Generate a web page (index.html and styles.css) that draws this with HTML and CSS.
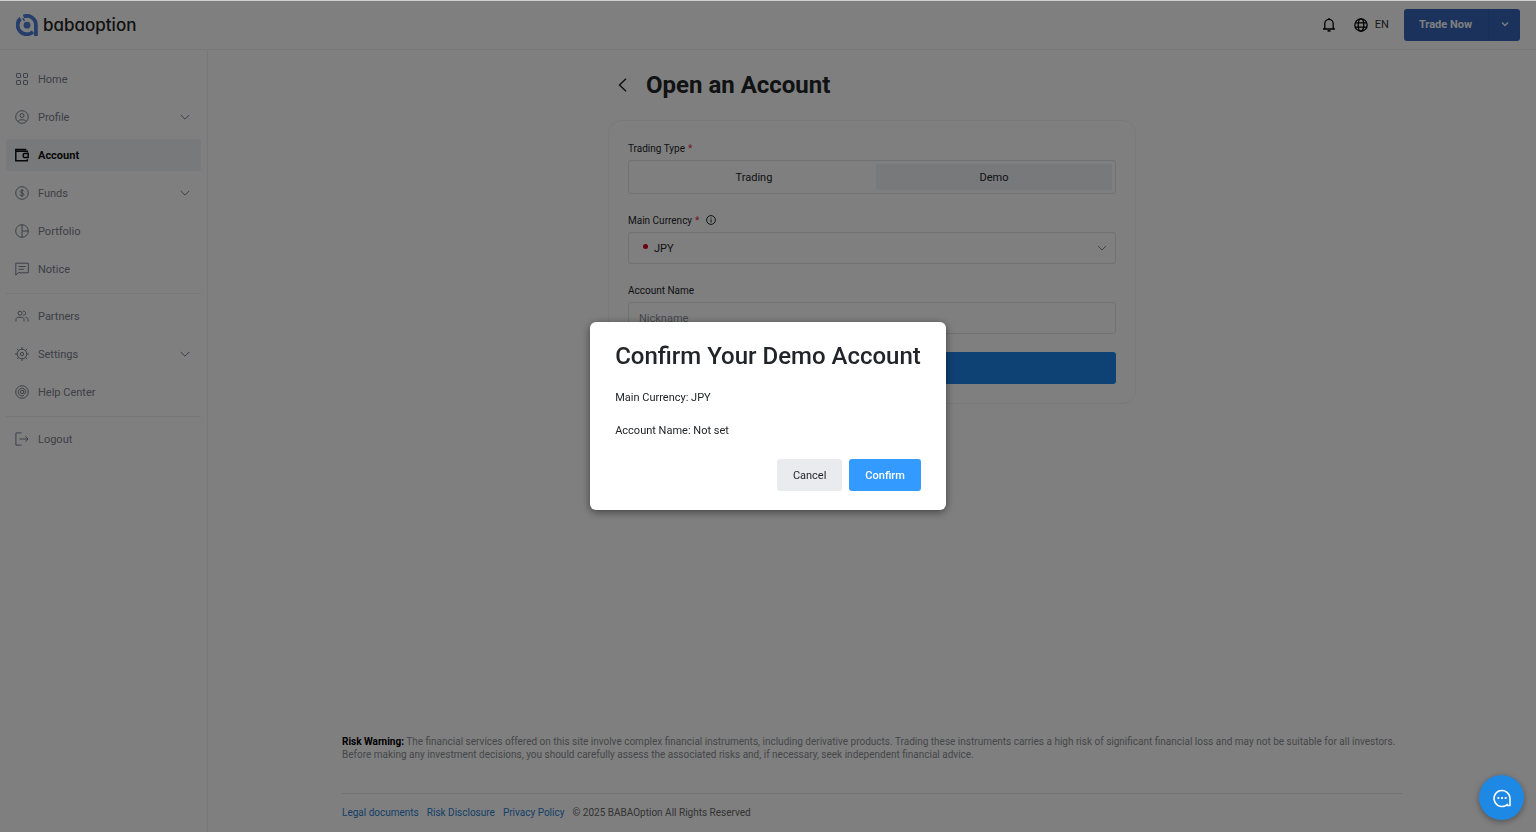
FILE: index.html
```html
<!DOCTYPE html>
<html lang="en">
<head>
  <meta charset="UTF-8" />
  <meta name="viewport" content="width=device-width, initial-scale=1.0" />
  <title>Open an Account</title>
  <link rel="stylesheet" href="styles.css">
</head>
<body>
  <header class="topbar">
    <a class="logo" href="#">
      <svg width="22" height="22" viewBox="0 0 22 22" fill="none" stroke="#4f7dd4">
        <path d="M4.500 4.500A9 9 0 1 0 17 17.800" stroke-width="3.800"/>
        <path d="M7.500 2.600A9 9 0 0 1 19.900 11V22" stroke-width="3.800"/>
        <path d="M6.800 4L8.500 7" stroke-width="1.400"/>
        <circle cx="11" cy="11.200" r="3.400" fill="#4f7dd4" stroke="none"/>
      </svg>
      <span>babaoption</span>
    </a>
    <div class="topbar-right">
      <button class="icon-btn" aria-label="Notifications">
        <svg width="14" height="14" viewBox="0 0 14 14" fill="none" stroke="currentColor" stroke-width="1.3">
          <path d="M1 11h12M2.800 11V5.600a4.200 4.200 0 0 1 8.400 0V11M7 0v1.500"/>
          <path d="M5.500 12.900h3" stroke-width="1.6"/>
        </svg>
      </button>
      <button class="lang">
        <svg width="14" height="14" viewBox="0 0 14 14" fill="none" stroke="currentColor" stroke-width="1.3">
          <circle cx="7" cy="7" r="6.2"/>
          <ellipse cx="7" cy="7" rx="2.8" ry="6.2"/>
          <path d="M1.2 4.800h11.600M1.200 9.200h11.600"/>
        </svg>
        <span>EN</span>
      </button>
      <div class="trade">
        <button class="trade-main">Trade Now</button>
        <button class="trade-more" aria-label="More">
          <svg width="8" height="8" viewBox="0 0 8 8" fill="none" stroke="currentColor" stroke-width="1.3"><path d="M1 2.500l3 3 3-3"/></svg>
        </button>
      </div>
    </div>
  </header>

  <div class="layout">
    <nav class="sidebar">
      <div class="nav-group">
        <a class="nav-item" href="#">
          <svg class="nav-icon" viewBox="0 0 14 14"><rect x="1.500" y="1.500" width="4" height="4" rx=".6"/><rect x="8.500" y="1.500" width="4" height="4" rx=".6"/><rect x="1.500" y="8.500" width="4" height="4" rx=".6"/><rect x="8.500" y="8.500" width="4" height="4" rx=".6"/></svg>
          <span>Home</span>
        </a>
        <a class="nav-item" href="#">
          <svg class="nav-icon" viewBox="0 0 14 14"><circle cx="7" cy="7" r="6.3"/><circle cx="7" cy="5.500" r="2"/><path d="M2.800 11.400C4 9.200 10 9.200 11.200 11.400"/></svg>
          <span>Profile</span>
          <svg class="chevron" viewBox="0 0 10 10"><path d="M.8 3L5 7.200 9.200 3"/></svg>
        </a>
        <a class="nav-item active" href="#">
          <svg class="nav-icon" viewBox="0 0 14 14"><path d="M12.300 4.500V3.200H.8v9.600h11.500v-1.500M.8 3.200V1.400h10.500"/><path d="M13.200 5.500H9.300a1 1 0 0 0-1 1v2a1 1 0 0 0 1 1h3.900z"/></svg>
          <span>Account</span>
        </a>
        <a class="nav-item" href="#">
          <svg class="nav-icon" viewBox="0 0 14 14"><circle cx="7" cy="7" r="6.3"/><path d="M9 5.300C8.600 3.800 5.200 3.900 5.200 5.500c0 1.800 3.700 1 3.700 2.900 0 1.700-3.500 1.800-4-.1M7 3v8"/></svg>
          <span>Funds</span>
          <svg class="chevron" viewBox="0 0 10 10"><path d="M.8 3L5 7.200 9.200 3"/></svg>
        </a>
        <a class="nav-item" href="#">
          <svg class="nav-icon" viewBox="0 0 14 14"><circle cx="7" cy="7" r="6.3"/><path d="M7 .7v12.600M7 7h6.300"/></svg>
          <span>Portfolio</span>
        </a>
        <a class="nav-item" href="#">
          <svg class="nav-icon" viewBox="0 0 14 14"><path d="M.8 13.200V1.200h12.500v9.600H3.200zM3.600 4.500h7M3.600 7.300h5.200"/></svg>
          <span>Notice</span>
        </a>
      </div>
      <div class="nav-group">
        <a class="nav-item" href="#">
          <svg class="nav-icon" viewBox="0 0 14 14"><circle cx="5" cy="4.200" r="2"/><path d="M8 2.300a2 2 0 1 1 0 3.800M1 12.500v-2c0-1.500 1-2.200 2.200-2.200h3.600C8 8.300 9 9 9 10.500v2M10.500 8.300c1.700 0 2.500.9 2.500 2.200v2"/></svg>
          <span>Partners</span>
        </a>
        <a class="nav-item" href="#">
          <svg class="nav-icon" viewBox="0 0 14 14"><circle cx="7" cy="7" r="4.800"/><circle cx="7" cy="7" r="1.600"/><path d="M7 0v2.200M7 11.800V14M0 7h2.200M11.800 7H14M2 2l1.600 1.600M10.400 10.400L12 12M12 2l-1.600 1.600M3.600 10.400L2 12"/></svg>
          <span>Settings</span>
          <svg class="chevron" viewBox="0 0 10 10"><path d="M.8 3L5 7.200 9.200 3"/></svg>
        </a>
        <a class="nav-item" href="#">
          <svg class="nav-icon" viewBox="0 0 14 14"><circle cx="7" cy="7" r="6.300"/><circle cx="7" cy="7" r="1.700"/><path d="M8.700 5.300v2.500c0 1.500 2.100 1.200 2.100-.8A3.800 3.800 0 1 0 9 10.300"/></svg>
          <span>Help Center</span>
        </a>
      </div>
      <div class="nav-group">
        <a class="nav-item" href="#">
          <svg class="nav-icon" viewBox="0 0 14 14"><path d="M6.500.9H.9v12.200h5.600M4.500 7h8.500M10.300 4.200L13.100 7l-2.800 2.800"/></svg>
          <span>Logout</span>
        </a>
      </div>
    </nav>

    <main class="content">
      <section class="open-account">
        <div class="page-title">
          <a class="back" href="#" aria-label="Back">
            <svg width="14" height="14" viewBox="0 0 14 14" fill="none" stroke="currentColor" stroke-width="1.5"><path d="M10 .7L3.500 7l6.500 6.300"/></svg>
          </a>
          <h1>Open an Account</h1>
        </div>
        <form class="card">
          <div class="field">
            <div class="label" id="typeLabel">Trading Type <span class="req">*</span></div>
            <div class="toggle" role="group" aria-labelledby="typeLabel">
              <button type="button">Trading</button>
              <button type="button" class="selected">Demo</button>
            </div>
          </div>
          <div class="field">
            <label class="label" for="currency">Main Currency <span class="req">*</span>
              <svg class="info" width="10" height="10" viewBox="0 0 10 10" fill="none" stroke="currentColor"><circle cx="5" cy="5" r="4.400"/><path d="M5 4.300v3.200M5 2.500v1"/></svg>
            </label>
            <div class="select-wrap">
              <select id="currency">
                <option>JPY</option>
              </select>
              <span class="flag"></span>
              <svg class="arrow" viewBox="0 0 10 10"><path d="M1 3l4 4 4-4"/></svg>
            </div>
          </div>
          <div class="field">
            <label class="label" for="nickname">Account Name</label>
            <input type="text" id="nickname" placeholder="Nickname">
          </div>
          <button type="button" class="submit" aria-label="Open account"></button>
        </form>
      </section>

      <footer class="footer">
        <p class="risk"><strong>Risk Warning:</strong> The financial services offered on this site involve complex financial instruments, including derivative products. Trading these instruments carries a high risk of significant financial loss and may not be suitable for all investors. Before making any investment decisions, you should carefully assess the associated risks and, if necessary, seek independent financial advice.</p>
        <div class="legal">
          <a href="#">Legal documents</a>
          <a href="#">Risk Disclosure</a>
          <a href="#">Privacy Policy</a>
          <span>© 2025 BABAOption All Rights Reserved</span>
        </div>
      </footer>
    </main>
  </div>

  <div class="overlay">
    <div class="modal" role="dialog" aria-modal="true" aria-labelledby="modalTitle">
      <h2 id="modalTitle">Confirm Your Demo Account</h2>
      <p>Main Currency: JPY</p>
      <p>Account Name: Not set</p>
      <div class="modal-buttons">
        <button class="cancel">Cancel</button>
        <button class="confirm">Confirm</button>
      </div>
    </div>
  </div>

  <button class="chat" aria-label="Chat">
    <svg width="20" height="20" viewBox="0 0 20 20" fill="none" stroke="#fff" stroke-width="1.500">
      <path d="M15.800 16A8 8 0 1 1 18 10.300v7.200h-2.800l-1-1"/>
      <path d="M5.500 10h1.800M9.100 10h1.800M12.700 10h1.800" stroke-width="1.800"/>
    </svg>
  </button>
</body>
</html>
```

FILE: styles.css
```css
* {
  box-sizing: border-box;
}

body {
  margin: 0;
  min-height: 100vh;
  display: flex;
  flex-direction: column;
  background: #fff;
  color: #212529;
  font-family: Roboto, "Liberation Sans", sans-serif;
  font-size: 11px;
}

body::before {
  content: "";
  position: fixed;
  top: 0;
  left: 0;
  right: 0;
  height: 1px;
  background: #cdd1d4;
  z-index: 20;
}

a {
  color: inherit;
  text-decoration: none;
}

button {
  border: 0;
  padding: 0;
  background: none;
  color: inherit;
  font: inherit;
  cursor: pointer;
}

/* header */
.topbar {
  display: flex;
  align-items: center;
  justify-content: space-between;
  height: 50px;
  padding: 0 16px;
  border-bottom: 1px solid #eff0f2;
}

.logo {
  display: flex;
  align-items: center;
  gap: 5px;
  color: #222;
  font-family: Inter, Lato, sans-serif;
  font-size: 17px;
  font-weight: 500;
  font-feature-settings: "cv11", "ss03";
}

.topbar-right {
  display: flex;
  align-items: center;
}

.icon-btn {
  display: flex;
  margin-right: 18px;
  color: #000;
}

.lang {
  display: flex;
  align-items: center;
  gap: 7px;
  margin-right: 15px;
  color: #000;
}

.lang span {
  color: #333;
}

.trade {
  display: flex;
  height: 32px;
  border-radius: 3px;
  overflow: hidden;
  background: #3565b8;
  color: #fff;
}

.trade-main {
  padding: 0 16px 0 15px;
  font-weight: 700;
}

.trade-more {
  width: 32px;
  border-left: 1px solid #3161b0;
}

/* sidebar */
.layout {
  flex: 1;
  display: flex;
}

.sidebar {
  width: 208px;
  padding: 6px;
  border-right: 1px solid #edeff2;
}

.nav-group {
  display: flex;
  flex-direction: column;
  gap: 6px;
  padding: 7px 0 8px;
}

.nav-group + .nav-group {
  padding-top: 6px;
  border-top: 1px solid #edeff2;
}

.nav-item {
  display: flex;
  align-items: center;
  gap: 9px;
  height: 32px;
  padding: 0 11px 0 9px;
  border-radius: 2px;
  color: #78808e;
}

.nav-item.active {
  background: #f0f2f5;
  color: #111;
  font-weight: 700;
}

.nav-icon {
  width: 14px;
  height: 14px;
  fill: none;
  stroke: currentColor;
}

.active .nav-icon {
  stroke-width: 1.5;
}

.chevron {
  width: 10px;
  height: 10px;
  margin-left: auto;
  fill: none;
  stroke: currentColor;
}

/* content */
.content {
  flex: 1;
  display: flex;
  flex-direction: column;
  padding: 0 16px;
}

.open-account {
  width: 100%;
  max-width: 528px;
  margin: 0 auto;
}

.page-title {
  display: flex;
  align-items: center;
  gap: 16px;
  height: 70px;
  padding-left: 8px;
}

.back {
  display: flex;
}

h1 {
  margin: 0;
  font-size: 24px;
  font-weight: 700;
}

.card {
  padding: 19px;
  border: 1px solid #f1f2f4;
  border-radius: 13px;
}

.field {
  margin-bottom: 18px;
}

.label {
  display: flex;
  align-items: center;
  gap: 3px;
  height: 16px;
  margin-bottom: 4px;
  font-size: 10px;
}

.req {
  color: #e5304a;
}

.info {
  margin-left: 4px;
}

.toggle {
  display: flex;
  height: 34px;
  padding: 3px;
  border: 1px solid #dee2e6;
  border-radius: 3px;
}

.toggle button {
  flex: auto;
  border-radius: 2px;
}

.toggle .selected {
  background: #f0f2f5;
}

.select-wrap {
  position: relative;
}

select,
input {
  display: block;
  width: 100%;
  height: 32px;
  padding: 0 10px;
  border: 1px solid #dee2e6;
  border-radius: 3px;
  background: #fff;
  color: inherit;
  font: inherit;
}

select {
  appearance: none;
  padding-left: 25px;
}

input::placeholder {
  color: #8d939b;
}

.flag {
  position: absolute;
  top: 12px;
  left: 15px;
  width: 5px;
  height: 5px;
  border-radius: 50%;
  background: #d80027;
}

.arrow {
  position: absolute;
  top: 11px;
  right: 9px;
  width: 10px;
  height: 10px;
  fill: none;
  stroke: #888;
  pointer-events: none;
}

.submit {
  display: block;
  width: 100%;
  height: 32px;
  border-radius: 3px;
  background: #1e84e8;
}

/* footer */
.footer {
  width: 100%;
  max-width: 1060px;
  margin: auto auto 0;
  color: #8a8f95;
  font-size: 10px;
  line-height: 13px;
}

.risk {
  margin: 0 0 32px;
}

.risk strong {
  color: #000;
}

.legal {
  display: flex;
  gap: 8px;
  padding: 12px 0 13px;
  border-top: 1px solid #dee2e6;
}

.legal a {
  color: #2a80d0;
}

.legal span {
  color: #666;
}

/* modal */
.overlay {
  position: fixed;
  inset: 0;
  display: flex;
  justify-content: center;
  align-items: center;
  background: rgba(0, 0, 0, 0.5);
  z-index: 10;
}

.modal {
  padding: 19px 25px;
  border-radius: 6px;
  background: #fff;
  box-shadow: 0 2px 8px rgba(0, 0, 0, 0.5);
}

.modal h2 {
  margin: 0 0 19px;
  font-size: 24px;
  font-weight: 500;
  line-height: 30px;
}

.modal p {
  margin: 0 0 17px;
  line-height: 16px;
}

.modal-buttons {
  display: flex;
  justify-content: flex-end;
  gap: 7px;
  margin-top: 20px;
}

.modal-buttons button {
  height: 32px;
  padding: 0 16px;
  border-radius: 3px;
}

.cancel {
  background: #e9ebef;
}

.confirm {
  background: #339bff;
  color: #fff;
  font-weight: 500;
}

.chat {
  position: fixed;
  right: 12px;
  bottom: 12px;
  display: flex;
  align-items: center;
  justify-content: center;
  width: 45px;
  height: 45px;
  border-radius: 50%;
  background: #1e88e5;
  box-shadow: 0 2px 6px rgba(0, 0, 0, 0.35);
  z-index: 15;
}
```
